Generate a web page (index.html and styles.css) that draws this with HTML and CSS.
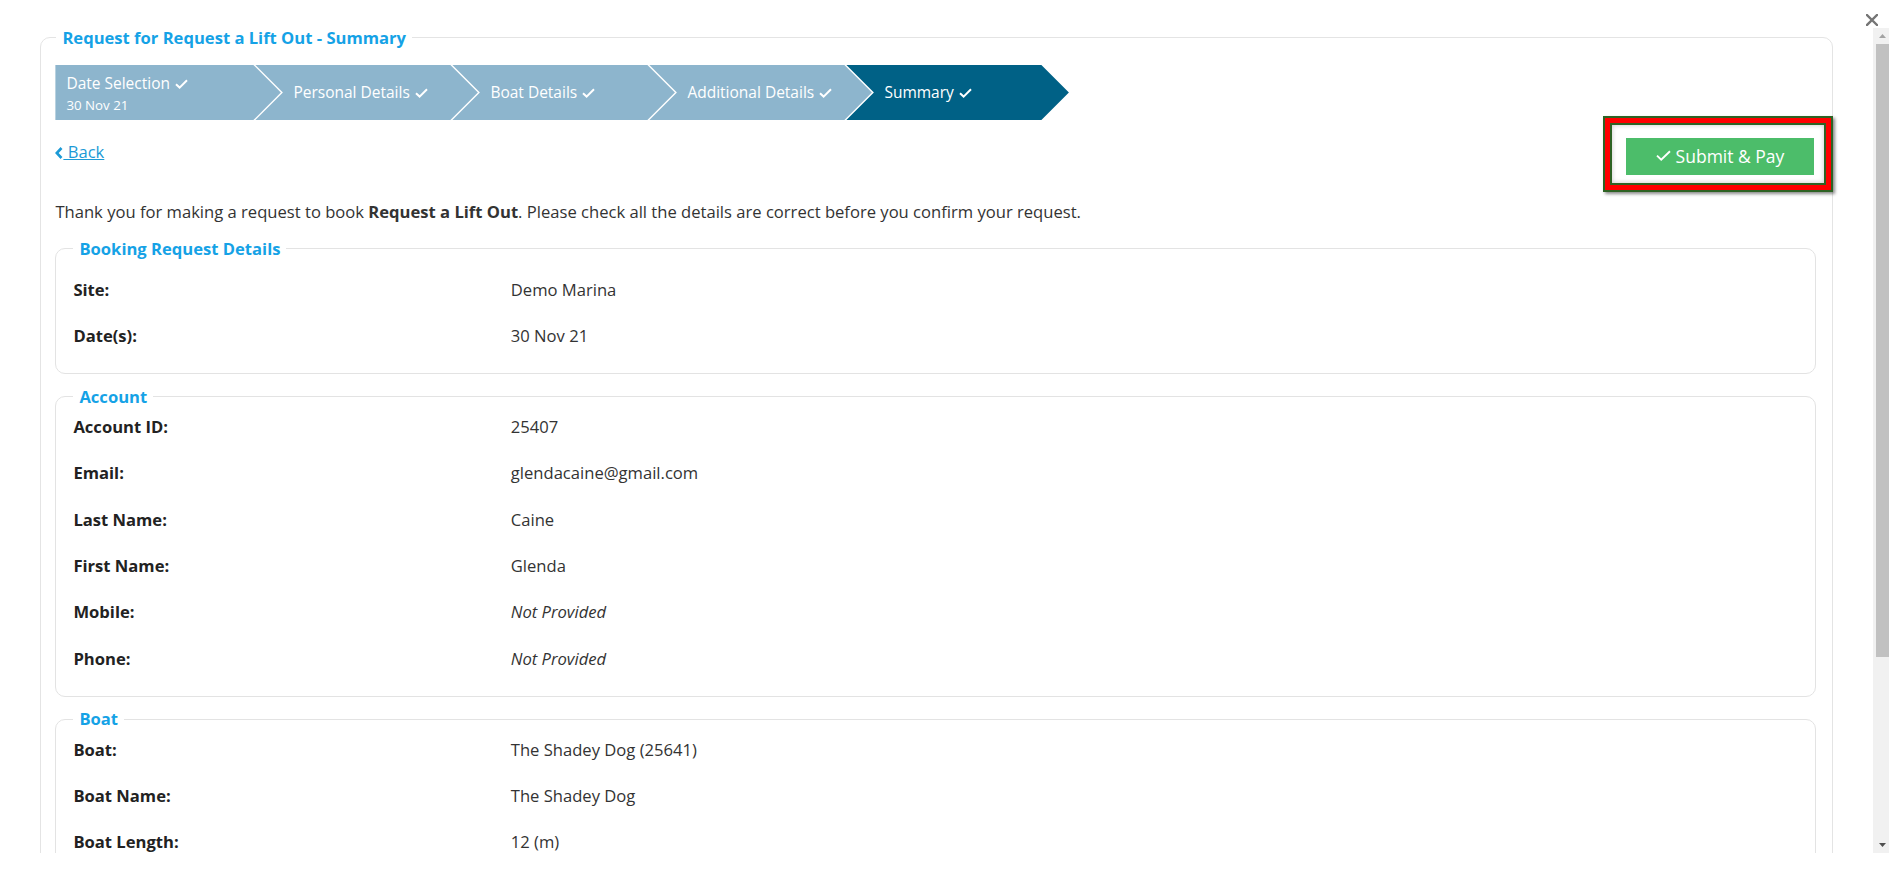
FILE: index.html
```html
<!DOCTYPE html>
<html lang="en">
<head>
<meta charset="utf-8">
<title>Request for Request a Lift Out - Summary</title>
<link rel="stylesheet" href="styles.css">
</head>
<body>
<div class="topbar">
  <button class="close" aria-label="Close">
    <svg width="12" height="12" viewBox="0 0 12 12"><path d="M1 1L11 11M11 1L1 11" stroke="#757575" stroke-width="2.4" stroke-linecap="square" fill="none"/></svg>
  </button>
</div>
<div class="frame">
  <div class="viewport">
    <fieldset class="panel">
      <legend>Request for Request a Lift Out - Summary</legend>
      <div class="stepper">
        <div class="step step-first">
          <div class="step-lines">
            <span class="step-title">Date Selection <svg class="check" width="13" height="10" viewBox="0 0 13 10"><path d="M1 5.2L4.6 8.6L12 1.2" stroke="#fff" stroke-width="2" fill="none"/></svg></span>
            <span class="step-sub">30 Nov 21</span>
          </div>
        </div>
        <div class="step"><span class="step-title">Personal Details <svg class="check" width="13" height="10" viewBox="0 0 13 10"><path d="M1 5.2L4.6 8.6L12 1.2" stroke="#fff" stroke-width="2" fill="none"/></svg></span></div>
        <div class="step"><span class="step-title">Boat Details <svg class="check" width="13" height="10" viewBox="0 0 13 10"><path d="M1 5.2L4.6 8.6L12 1.2" stroke="#fff" stroke-width="2" fill="none"/></svg></span></div>
        <div class="step"><span class="step-title">Additional Details <svg class="check" width="13" height="10" viewBox="0 0 13 10"><path d="M1 5.2L4.6 8.6L12 1.2" stroke="#fff" stroke-width="2" fill="none"/></svg></span></div>
        <div class="step step-current"><span class="step-title">Summary <svg class="check" width="13" height="10" viewBox="0 0 13 10"><path d="M1 5.2L4.6 8.6L12 1.2" stroke="#fff" stroke-width="2" fill="none"/></svg></span></div>
      </div>

      <div class="actions">
        <a class="back" href="#"><svg class="chev" width="8" height="12" viewBox="0 0 8 12"><path d="M6.5 1L1.8 6L6.5 11" stroke="#1c9ad6" stroke-width="2.6" fill="none"/></svg><span>&nbsp;Back</span></a>
        <div class="submit-wrap">
          <button class="submit"><svg width="15" height="11" viewBox="0 0 15 11"><path d="M1 5.6L5.2 9.6L14 1.2" stroke="#fff" stroke-width="1.9" fill="none"/></svg>Submit &amp; Pay</button>
          <div class="highlight"></div>
        </div>
      </div>

      <p class="intro">Thank you for making a request to book <b>Request a Lift Out</b>. Please check all the details are correct before you confirm your request.</p>

      <fieldset class="box box-first">
        <legend>Booking Request Details</legend>
        <dl class="rows">
          <dt>Site:</dt><dd>Demo Marina</dd>
          <dt>Date(s):</dt><dd>30 Nov 21</dd>
        </dl>
      </fieldset>

      <fieldset class="box">
        <legend>Account</legend>
        <dl class="rows">
          <dt>Account ID:</dt><dd>25407</dd>
          <dt>Email:</dt><dd>glendacaine@gmail.com</dd>
          <dt>Last Name:</dt><dd>Caine</dd>
          <dt>First Name:</dt><dd>Glenda</dd>
          <dt>Mobile:</dt><dd class="muted">Not Provided</dd>
          <dt>Phone:</dt><dd class="muted">Not Provided</dd>
        </dl>
      </fieldset>

      <fieldset class="box">
        <legend>Boat</legend>
        <dl class="rows">
          <dt>Boat:</dt><dd>The Shadey Dog (25641)</dd>
          <dt>Boat Name:</dt><dd>The Shadey Dog</dd>
          <dt>Boat Length:</dt><dd>12 (m)</dd>
        </dl>
      </fieldset>
    </fieldset>
  </div>
  <div class="scrollbar">
    <div class="sb-btn"><svg width="7" height="4" viewBox="0 0 7 4"><path d="M0 4L3.5 0L7 4Z" fill="#a3a3a3"/></svg></div>
    <div class="sb-thumb"></div>
    <div class="sb-track"></div>
    <div class="sb-btn"><svg width="7" height="4" viewBox="0 0 7 4"><path d="M0 0L7 0L3.5 4Z" fill="#505050"/></svg></div>
  </div>
</div>
</body>
</html>
```

FILE: styles.css
```css
* { box-sizing: border-box; }
html, body { margin: 0; padding: 0; background: #fff; }
body {
  width: 1889px;
  height: 876px;
  overflow: hidden;
  font-family: "Open Sans", "Noto Sans", sans-serif;
  font-size: 16.6px;
  line-height: 20px;
  color: #333;
}

.topbar {
  height: 25px;
  display: flex;
  justify-content: flex-end;
  align-items: flex-start;
}
.close {
  margin: 14px 11px 0 0;
  width: 12px;
  height: 12px;
  padding: 0;
  border: 0;
  background: none;
}
.close svg { display: block; }

.frame {
  display: flex;
  height: 828px;
}
.viewport {
  flex: 1;
  min-width: 0;
  overflow: hidden;
  padding: 3px 40px 0;
}

/* fake scrollbar */
.scrollbar {
  width: 16px;
  flex: none;
  margin-top: 3px;
  background: #f1f1f1;
  display: flex;
  flex-direction: column;
}
.sb-btn {
  height: 16px;
  display: flex;
  align-items: center;
  justify-content: center;
  padding-left: 2px;
}
.sb-btn svg { display: block; }
.sb-thumb {
  height: 613px;
  margin-left: 3px;
  background: #c1c1c1;
}
.sb-track { flex: 1; }

/* outer panel */
.panel {
  margin: 0;
  padding: 0 16px 0 14.4px;
  border: 1px solid #e4e4e4;
  border-radius: 10px;
  min-width: 0;
}
.panel > legend {
  margin-left: 1px;
  padding: 0 6px;
  font-weight: 700;
  font-size: 16.6px;
  line-height: 19px;
  color: #15a2e6;
}

/* stepper */
.stepper {
  display: flex;
  height: 55px;
  margin-top: 18px;
}
.step {
  flex: none;
  width: 222.5px;
  height: 55px;
  margin-left: -25.5px;
  padding-left: 38px;
  padding-bottom: 1px;
  display: flex;
  align-items: center;
  background: #8db5cd;
  color: #fff;
  font-size: 15.5px;
  clip-path: polygon(0 0, calc(100% - 27.5px) 0, 100% 50%, calc(100% - 27.5px) 100%, 0 100%, 27.5px 50%);
}
.step-first {
  width: 225.5px;
  margin-left: 0;
  padding-left: 11px;
  padding-bottom: 0;
  clip-path: polygon(0 0, calc(100% - 27.5px) 0, 100% 50%, calc(100% - 27.5px) 100%, 0 100%);
}
.step-current { background: #006186; }
.step-lines {
  display: flex;
  flex-direction: column;
  margin-top: 3px;
}
.step-title { white-space: nowrap; line-height: 20px; }
.step-sub { font-size: 13.3px; line-height: 20px; margin-top: 2px; }
.check { vertical-align: 0; margin-left: 1px; }

/* actions */
.actions {
  display: flex;
  justify-content: space-between;
  align-items: flex-start;
  margin-top: 18px;
}
.back {
  margin-top: 4px;
  color: #1c9ad6;
  text-decoration: underline;
  line-height: 20px;
}
.chev { vertical-align: -1px; }
.submit-wrap {
  position: relative;
  margin-right: 2px;
}
.submit {
  display: flex;
  align-items: center;
  justify-content: center;
  gap: 5px;
  width: 188px;
  height: 37px;
  padding: 0 0 2px;
  border: 0;
  background: #4cbd6a;
  color: #fff;
  font: inherit;
  font-size: 17.5px;
}
.highlight {
  position: absolute;
  top: -22px;
  left: -23px;
  right: -19px;
  bottom: -17px;
  border: 2px solid #2e6324;
  box-shadow:
    inset 0 0 0 5px #ff0000,
    inset 0 0 0 7px #2e6324,
    inset 0 0 5px 7px rgba(0, 0, 0, 0.22),
    2px 2px 3px rgba(0, 0, 0, 0.45);
  pointer-events: none;
}

.intro {
  margin: 27px 0 0;
  line-height: 20px;
}

/* boxes */
.box {
  margin: 12.5px 0 0;
  padding: 10.5px 17px 1px;
  border: 1px solid #e3e3e3;
  border-radius: 10px;
  min-width: 0;
}
.box-first {
  margin-top: 16.5px;
  padding-top: 21px;
}
.box > legend {
  padding: 0 6px;
  font-weight: 700;
  line-height: 20px;
  color: #15a2e6;
}
.rows {
  display: grid;
  grid-template-columns: 437.4px 1fr;
  row-gap: 26.3px;
  margin: 0 0 26.3px;
}
.rows dt {
  font-weight: 700;
  color: #222;
}
.rows dd { margin: 0; }
.rows .muted { font-style: italic; }
```
